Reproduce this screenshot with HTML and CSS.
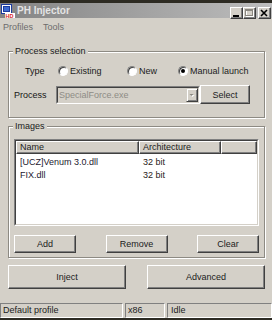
FILE: index.html
```html
<!DOCTYPE html>
<html>
<head>
<meta charset="utf-8">
<title>PH Injector</title>
<link rel="stylesheet" href="styles.css">
</head>
<body>
<div class="window">
  <div class="titlebar">
    <svg class="app-icon" width="14" height="14" viewBox="0 0 14 14">
      <rect x="0" y="0" width="11" height="10" fill="#1d3d9e"/>
      <rect x="1.5" y="1.5" width="8" height="7" fill="none" stroke="#ffffff" stroke-width="1"/>
      <rect x="3" y="3" width="5" height="4" fill="#3d6ad0"/>
      <rect x="4" y="9" width="10" height="5" fill="#ffffff"/>
      <text x="4.5" y="13.6" font-family="Liberation Sans" font-size="5.5" font-weight="bold" fill="#d81c1c">HD</text>
    </svg>
    <span class="title">PH Injector</span>
    <div class="caption-buttons">
      <span class="cbtn">
        <svg width="11" height="9" viewBox="0 0 11 9"><rect x="2" y="6" width="6" height="2" fill="#000"/></svg>
      </span>
      <span class="cbtn">
        <svg width="11" height="9" viewBox="0 0 11 9">
          <rect x="2.5" y="1.5" width="7" height="6" fill="none" stroke="#ffffff" stroke-width="1"/>
          <rect x="1.5" y="0.5" width="7" height="6" fill="none" stroke="#8a8780" stroke-width="1"/>
          <rect x="1" y="1" width="8" height="1" fill="#8a8780"/>
        </svg>
      </span>
      <span class="cbtn close">
        <svg width="11" height="9" viewBox="0 0 11 9"><path d="M2 1 L8 7 M8 1 L2 7" stroke="#000" stroke-width="1.6"/></svg>
      </span>
    </div>
  </div>

  <div class="menubar">
    <span class="menu-item">Profiles</span>
    <span class="menu-item">Tools</span>
  </div>

  <div class="content">
    <fieldset class="group">
      <legend>Process selection</legend>
      <div class="process-body">
        <div class="type-row">
          <span class="lbl">Type</span>
          <label class="radio-opt"><span class="radio"></span>Existing</label>
          <label class="radio-opt"><span class="radio"></span>New</label>
          <label class="radio-opt"><span class="radio checked"><span class="dot"></span></span>Manual launch</label>
        </div>
        <div class="process-row">
          <span class="lbl process-lbl">Process</span>
          <div class="combo">
            <div class="combo-inner">
              <span class="combo-text">SpecialForce.exe</span>
              <span class="combo-arrow">
                <svg width="7" height="5" viewBox="0 0 7 5">
                  <path d="M1.5 2 L5.5 2 L3.5 4 Z" fill="#ffffff"/>
                  <path d="M0.5 1 L4.5 1 L2.5 3 Z" fill="#8a8780"/>
                </svg>
              </span>
            </div>
          </div>
          <button class="btn select-btn">Select</button>
        </div>
      </div>
    </fieldset>

    <fieldset class="group images">
      <legend>Images</legend>
      <div class="images-body">
        <div class="listview">
          <div class="lv-inner">
            <div class="lv-header">
              <span class="hcell c1">Name</span>
              <span class="hcell c2">Architecture</span>
              <span class="hcell c3"></span>
            </div>
            <div class="lv-rows">
              <div class="lv-row"><span class="c1">[UCZ]Venum 3.0.dll</span><span class="c2">32 bit</span></div>
              <div class="lv-row"><span class="c1">FIX.dll</span><span class="c2">32 bit</span></div>
            </div>
          </div>
        </div>
        <div class="images-buttons">
          <button class="btn small">Add</button>
          <button class="btn small">Remove</button>
          <button class="btn small">Clear</button>
        </div>
      </div>
    </fieldset>

    <div class="actions">
      <button class="btn big">Inject</button>
      <button class="btn big">Advanced</button>
    </div>
  </div>

  <div class="statusbar">
    <span class="pane p1">Default profile</span>
    <span class="pane p2">x86</span>
    <span class="pane p3">Idle</span>
  </div>
</div>
</body>
</html>
```

FILE: styles.css
```css
* {
  box-sizing: border-box;
}

html,
body {
  margin: 0;
  padding: 0;
}

body {
  width: 272px;
  height: 320px;
  overflow: hidden;
  background: #2d2b23;
  font-family: "Liberation Sans", Arial, sans-serif;
  font-size: 9px;
  color: #1b1b1b;
}

.window {
  margin-top: 3px;
  height: 315px;
  background: #d4d0c8;
  display: flex;
  flex-direction: column;
}

/* Title bar */
.titlebar {
  height: 15px;
  flex: none;
  display: flex;
  align-items: center;
  background: linear-gradient(to right, #848484, #bdbdbd);
}

.app-icon {
  display: block;
  margin-left: 1px;
  margin-top: 1px;
}

.title {
  margin-left: 2px;
  font-size: 10px;
  font-weight: bold;
  color: #e4e4e4;
  line-height: 15px;
}

.caption-buttons {
  margin-left: auto;
  align-self: flex-end;
  display: flex;
  padding-right: 1px;
  margin-bottom: -1px;
}

.cbtn {
  width: 13px;
  height: 12px;
  display: flex;
  align-items: center;
  justify-content: center;
  background: #d4d0c8;
  border: 1px solid;
  border-color: #ffffff #404040 #404040 #ffffff;
  box-shadow: inset -1px -1px 0 #808080;
}

.cbtn.close {
  margin-left: 2px;
}

.cbtn svg {
  display: block;
}

/* Menu */
.menubar {
  height: 18px;
  flex: none;
  display: flex;
  align-items: center;
  gap: 10px;
  padding-left: 3px;
  color: #6c6c6c;
}

/* Content */
.content {
  flex: 1;
  padding: 10px 7px 0 8px;
  display: flex;
  flex-direction: column;
}

.group {
  margin: 0;
  padding: 0 4px;
  min-width: 0;
  border: 1px solid #8d8a83;
  box-shadow: inset 1px 1px 0 #ffffff, 1px 1px 0 #ffffff;
}

.group legend {
  padding: 0 2px;
  line-height: 11px;
  background: #d4d0c8;
  color: #1b1b1b;
}

.group.images {
  margin-top: 3px;
}

.process-body {
  padding: 7px 0 13px;
}

.lbl {
  color: #161616;
}

.type-row {
  height: 14px;
  display: grid;
  grid-template-columns: 33px 69px 51px auto;
  align-items: center;
  padding-left: 12px;
}

.radio-opt {
  display: flex;
  align-items: center;
  gap: 2px;
}

.radio {
  width: 10px;
  height: 10px;
  flex: none;
  border-radius: 50%;
  background: #ffffff;
  border: 1px solid;
  border-color: #808080 #ffffff #ffffff #808080;
  box-shadow: inset 1px 1px 0 #404040;
  display: flex;
  align-items: center;
  justify-content: center;
}

.radio .dot {
  width: 4px;
  height: 4px;
  border-radius: 50%;
  background: #000000;
}

.process-row {
  margin-top: 7px;
  height: 19px;
  display: flex;
  align-items: center;
  padding-left: 1px;
}

.process-lbl {
  width: 42px;
  flex: none;
}

.combo {
  width: 144px;
  flex: none;
  height: 18px;
  margin-top: 1px;
  border: 1px solid;
  border-color: #808080 #ffffff #ffffff #808080;
}

.select-btn {
  width: 50px;
  margin-left: 9px;
}

.combo-inner {
  height: 100%;
  border: 1px solid;
  border-color: #404040 #d4d0c8 #d4d0c8 #404040;
  display: flex;
  align-items: center;
}

.combo-text {
  flex: 1;
  padding-left: 1px;
  color: #8e8c86;
}

.combo-arrow {
  width: 12px;
  height: 14px;
  display: flex;
  align-items: center;
  justify-content: center;
  border: 1px solid;
  border-color: #d4d0c8 #404040 #404040 #d4d0c8;
  box-shadow: inset 1px 1px 0 #ffffff, inset -1px -1px 0 #808080;
}

.combo-arrow svg {
  display: block;
}

/* Buttons */
.btn {
  margin: 0;
  padding: 0;
  font-family: "Liberation Sans", Arial, sans-serif;
  font-size: 9px;
  color: #1b1b1b;
  background: #d4d0c8;
  border: 1px solid;
  border-color: #ffffff #404040 #404040 #ffffff;
  box-shadow: inset -1px -1px 0 #808080;
  display: flex;
  align-items: center;
  justify-content: center;
  height: 19px;
}

/* Images */
.images-body {
  padding: 7px 1px 4px;
}

.listview {
  height: 87px;
  border: 1px solid;
  border-color: #808080 #ffffff #ffffff #808080;
}

.lv-inner {
  height: 100%;
  border: 1px solid;
  border-color: #404040 #d4d0c8 #d4d0c8 #404040;
  background: #ffffff;
}

.lv-header {
  height: 13px;
  display: flex;
}

.hcell {
  height: 13px;
  line-height: 11px;
  padding-left: 3px;
  background: #d4d0c8;
  border: 1px solid;
  border-color: #ffffff #404040 #404040 #ffffff;
  box-shadow: inset -1px -1px 0 #808080;
}

.hcell.c1 {
  width: 123px;
}

.hcell.c2 {
  width: 82px;
}

.hcell.c3 {
  flex: 1;
}

.lv-rows {
  padding-top: 2px;
}

.lv-row {
  height: 13px;
  line-height: 13px;
  display: flex;
  color: #1c2030;
}

.lv-row .c1 {
  width: 123px;
  padding-left: 4px;
}

.lv-row .c2 {
  padding-left: 4px;
  color: #2a2218;
}

.images-buttons {
  margin-top: 9px;
  display: flex;
  justify-content: space-between;
}

.btn.small {
  width: 62px;
  height: 18px;
}

.actions {
  margin-top: 7px;
  display: flex;
  justify-content: space-between;
}

.btn.big {
  width: 118px;
  height: 24px;
}

/* Status bar */
.statusbar {
  height: 16px;
  flex: none;
  display: flex;
  gap: 2px;
  padding-top: 1px;
}

.pane {
  height: 15px;
  line-height: 13px;
  padding-left: 2px;
  border: 1px solid;
  border-color: #808080 #ffffff #ffffff #808080;
}

.pane.p1 {
  width: 123px;
}

.pane.p2 {
  width: 40px;
}

.pane.p3 {
  flex: 1;
  padding-left: 3px;
}
```
